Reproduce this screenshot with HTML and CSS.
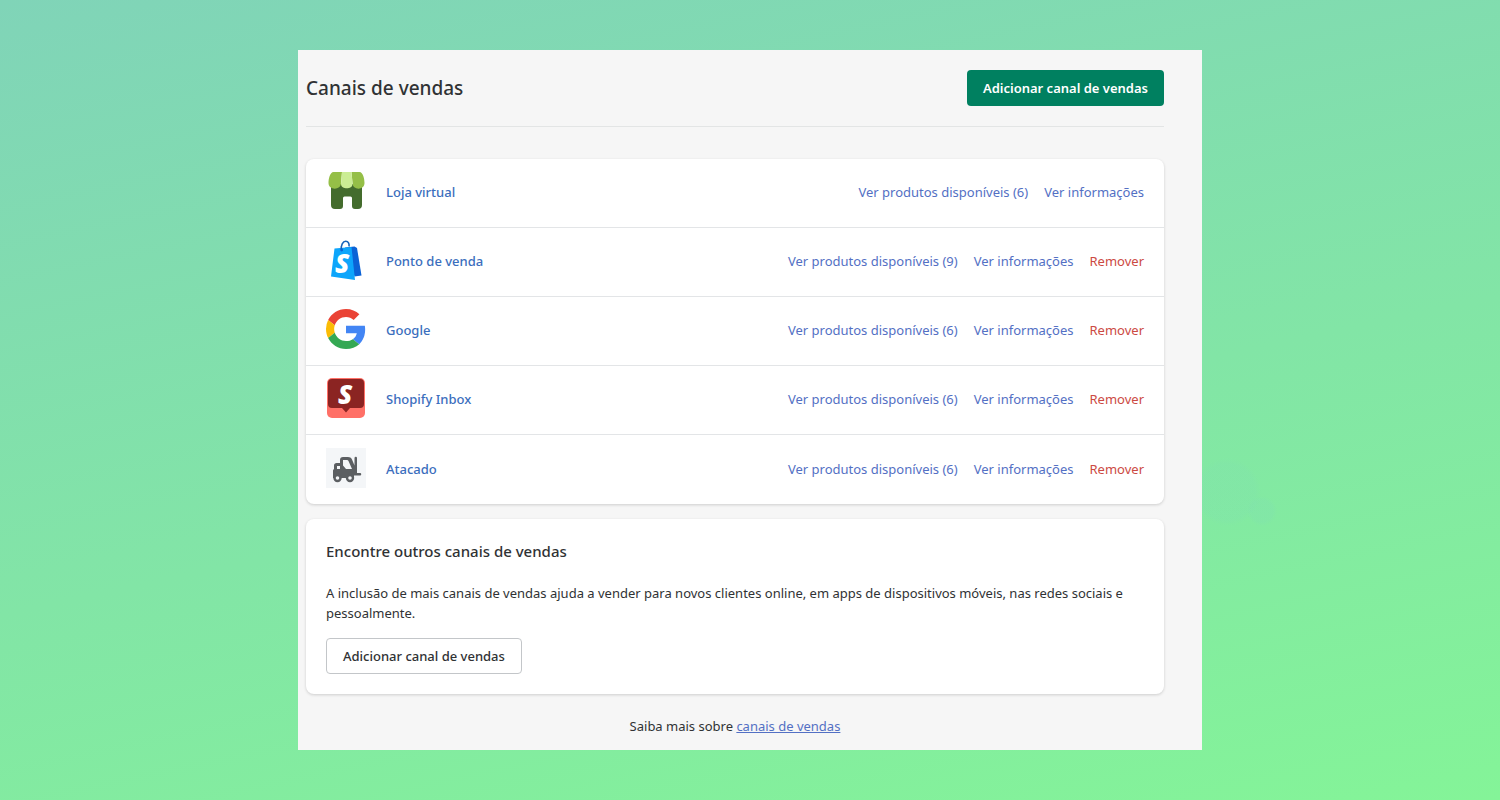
FILE: index.html
```html
<!DOCTYPE html>
<html lang="pt-BR">
<head>
<meta charset="utf-8">
<meta name="viewport" content="width=device-width, initial-scale=1">
<title>Canais de vendas</title>
<link rel="stylesheet" href="styles.css">
</head>
<body>
<main class="panel">
  <header class="header">
    <h1 class="title">Canais de vendas</h1>
    <button type="button" class="button button-primary">Adicionar canal de vendas</button>
  </header>

  <ul class="card channels">
    <li class="channel">
      <svg class="icon" viewBox="0 0 40 40" aria-hidden="true">
        <path fill="#446c2d" d="M5 13h31v21a4 4 0 0 1-4 4h-3a3 3 0 0 1-3-3v-8a1.500 1.500 0 0 0-1.500-1.500h-6A1.500 1.500 0 0 0 17 27v8a3 3 0 0 1-3 3H9a4 4 0 0 1-4-4z"/>
        <path fill="#95bf47" d="M7.500 1H16l-1 11c0 7.500-12.500 7.500-12.500 0C2.500 8 4 1 7.500 1z"/>
        <path fill="#95bf47" d="M33.500 1h-8l1 11c0 7.500 12 7.500 12 0C38.500 8 37 1 33.500 1z"/>
        <path fill="#cbed94" d="M16 1h9.500l1 12c0 5.800-11.500 5.800-11.500 0z"/>
      </svg>
      <a class="name" href="#loja-virtual">Loja virtual</a>
      <a class="action" href="#loja-produtos">Ver produtos disponíveis (6)</a>
      <a class="action" href="#loja-info">Ver informações</a>
    </li>
    <li class="channel">
      <svg class="icon" viewBox="0 0 40 40" aria-hidden="true">
        <path fill="#0b62d6" d="M19 7.500l9.500-1 2.500 1.500 4.500 27.500-7 1z"/>
        <path fill="#0da5fb" d="M8.500 8.500L25.500 7l3.500 33L5 36.500z"/>
        <path fill="none" stroke="#1762b8" stroke-width="1.600" d="M15.500 10C14.500 5 17 1.300 19.700 1.300S23.500 4 23 6.500"/>
        <circle cx="15.700" cy="10" r="1.400" fill="#0b62d6"/>
        <text class="logo-letter" x="9" y="33" font-size="26">S</text>
      </svg>
      <a class="name" href="#ponto-de-venda">Ponto de venda</a>
      <a class="action" href="#ponto-produtos">Ver produtos disponíveis (9)</a>
      <a class="action" href="#ponto-info">Ver informações</a>
      <button type="button" class="remove">Remover</button>
    </li>
    <li class="channel">
      <svg class="icon" viewBox="0 0 48 48" aria-hidden="true">
        <path fill="#ea4335" d="M24 9.500c3.540 0 6.710 1.220 9.210 3.600l6.850-6.850C35.900 2.380 30.470 0 24 0 14.620 0 6.510 5.380 2.560 13.220l7.980 6.190C12.430 13.720 17.740 9.500 24 9.500z"/>
        <path fill="#4285f4" d="M46.980 24.550c0-1.570-.15-3.090-.38-4.550H24v9.020h12.940c-.58 2.960-2.260 5.480-4.780 7.180l7.730 6c4.510-4.180 7.090-10.360 7.090-17.650z"/>
        <path fill="#fbbc05" d="M10.530 28.590A14.500 14.500 0 0 1 9.770 24c0-1.600.27-3.140.76-4.590l-7.980-6.190A24 24 0 0 0 0 24c0 3.880.92 7.540 2.560 10.780z"/>
        <path fill="#34a853" d="M24 48c6.480 0 11.930-2.130 15.890-5.810l-7.730-6c-2.150 1.450-4.920 2.300-8.160 2.300-6.260 0-11.570-4.220-13.470-9.910l-7.980 6.190C6.510 42.620 14.620 48 24 48z"/>
      </svg>
      <a class="name" href="#google">Google</a>
      <a class="action" href="#google-produtos">Ver produtos disponíveis (6)</a>
      <a class="action" href="#google-info">Ver informações</a>
      <button type="button" class="remove">Remover</button>
    </li>
    <li class="channel">
      <svg class="icon" viewBox="0 0 40 40" aria-hidden="true">
        <rect x="1" width="38" height="40" rx="5" fill="#ff7067"/>
        <path fill="#8b2422" d="M6 1h28a4 4 0 0 1 4 4v21a4 4 0 0 1-4 4H24l-4 4.500-4-4.500H6a4 4 0 0 1-4-4V5a4 4 0 0 1 4-4z"/>
        <text class="logo-letter" x="12" y="26" font-size="26">S</text>
      </svg>
      <a class="name" href="#shopify-inbox">Shopify Inbox</a>
      <a class="action" href="#inbox-produtos">Ver produtos disponíveis (6)</a>
      <a class="action" href="#inbox-info">Ver informações</a>
      <button type="button" class="remove">Remover</button>
    </li>
    <li class="channel">
      <svg class="icon" viewBox="0 0 40 40" aria-hidden="true">
        <rect width="40" height="40" fill="#f4f6f8"/>
        <path fill="#5c5f62" fill-rule="evenodd" d="M8 17.500c0-1.500 1-2.500 2.500-2.500H14v-3c0-2 1-3 3-3h5c2 0 3 .7 4 2.500l2.500 6V10a1.200 1.200 0 0 1 2.500 0v15h3a1.200 1.200 0 0 1 0 2.500h-6V30H7v-7c0-1 .3-1.500 1-2zM11 18v3h3v-3zM17 12v5.500l3 3.500h6l-3.500-8c-.3-.7-.8-1-1.500-1z"/>
        <g fill="#f4f6f8" stroke="#5c5f62" stroke-width="2.400"><circle cx="11.500" cy="30" r="3"/><circle cx="24" cy="30" r="3"/></g>
      </svg>
      <a class="name" href="#atacado">Atacado</a>
      <a class="action" href="#atacado-produtos">Ver produtos disponíveis (6)</a>
      <a class="action" href="#atacado-info">Ver informações</a>
      <button type="button" class="remove">Remover</button>
    </li>
  </ul>

  <section class="card more">
    <h2 class="subtitle">Encontre outros canais de vendas</h2>
    <p class="text">A inclusão de mais canais de vendas ajuda a vender para novos clientes online, em apps de dispositivos móveis, nas redes sociais e pessoalmente.</p>
    <button type="button" class="button">Adicionar canal de vendas</button>
  </section>

  <footer class="footer">Saiba mais sobre <a class="help" href="#ajuda">canais de vendas</a></footer>
</main>
</body>
</html>
```
FILE: styles.css
```css
* {
  box-sizing: border-box;
}

body {
  margin: 0;
  min-height: 100vh;
  padding: 50px 16px;
  font: 13px/20px "Noto Sans", "Open Sans", sans-serif;
  color: #303234;
  background:
    radial-gradient(circle at calc(50% + 477px) 492px, rgba(128, 222, 180, 0.2) 28px, transparent 34px),
    radial-gradient(circle at calc(50% + 512px) 511px, rgba(128, 222, 180, 0.25) 11px, transparent 15px),
    linear-gradient(168deg, #80d4b8, #82e5a6 55%, #84f498);
}

.panel {
  max-width: 904px;
  min-height: 700px;
  margin: 0 auto;
  padding: 0 38px 12px 8px;
  background: #f6f6f6;
}

.header {
  display: flex;
  align-items: center;
  justify-content: space-between;
  padding: 20px 0;
  margin-bottom: 32px;
  border-bottom: 1px solid #e3e5e5;
}

.title {
  margin: 0;
  font-size: 19px;
  line-height: 28px;
  font-weight: 500;
}

.button {
  height: 36px;
  padding: 0 16px;
  border: 1px solid #c3c6c9;
  border-radius: 4px;
  background: #fff;
  color: #303234;
  font: inherit;
  font-weight: 500;
}

.button-primary {
  border: 0;
  background: #008060;
  color: #fff;
  font-weight: 600;
}

.card {
  border-radius: 8px;
  background: #fff;
  box-shadow: 0 1px 3px rgba(23, 24, 24, 0.18);
}

.channels {
  margin: 0 0 15px;
  padding: 0;
  list-style: none;
}

.channel {
  display: flex;
  align-items: center;
  gap: 16px;
  min-height: 69px;
  padding: 0 20px 2px;
  border-bottom: 1px solid #e3e5e7;
}

.channel:last-child {
  border-bottom: 0;
}

.icon {
  flex: none;
  width: 40px;
  height: 40px;
  margin-bottom: 2px;
  overflow: visible;
}

.logo-letter {
  fill: #fff;
  font-family: "Noto Sans", sans-serif;
  font-weight: 900;
  font-style: italic;
}

.name {
  margin-left: 4px;
  margin-right: auto;
  color: #3b6ebd;
  font-weight: 500;
  text-decoration: none;
}

.action {
  color: #5370c4;
  text-decoration: none;
}

.remove {
  padding: 0;
  border: 0;
  background: none;
  color: #cc4a43;
  font: inherit;
}

.more {
  padding: 22px 20px 20px;
}

.subtitle {
  margin: 0 0 22px;
  font-size: 15px;
  line-height: 20px;
  font-weight: 500;
}

.text {
  margin: 0 0 15px;
}

.footer {
  margin-top: 22px;
  text-align: center;
}

.help {
  color: #5370c4;
}
```
